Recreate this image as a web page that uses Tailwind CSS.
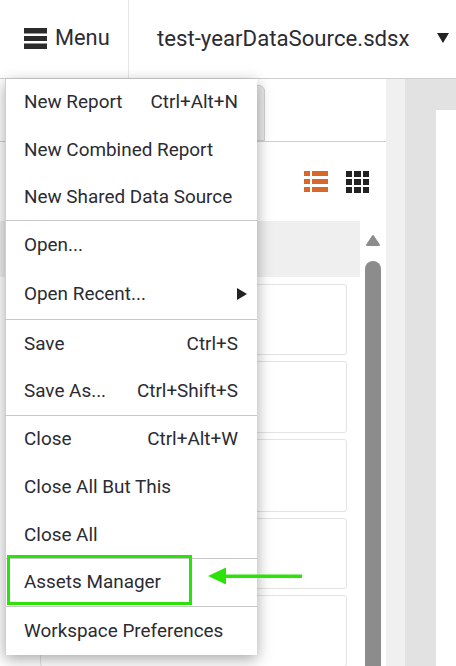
<!DOCTYPE html>
<html lang="en">
<head>
<meta charset="UTF-8">
<title>Menu</title>
<script src="https://cdn.jsdelivr.net/npm/@tailwindcss/browser@4"></script>
</head>
<body class="relative w-[456px] h-[666px] overflow-hidden bg-white font-['Roboto',sans-serif] text-[#2b2b33]">
  <!-- top bar -->
  <header class="flex h-[79px] border-b border-[#cfcfcf] bg-white">
    <div class="flex items-center w-[129px] pl-6 pb-[2px] border-r border-[#e6e6e6] h-full">
      <svg width="23" height="21" viewBox="0 0 23 21" class="mr-[8px]"><path fill="#2b2b2b" d="M0 0h23v5.5H0zM0 8h23v5H0zM0 15.5h23V21H0z"/></svg>
      <span class="text-[21.8px]">Menu</span>
    </div>
    <div class="flex items-center pl-[28px] text-[22.2px]">test-yearDataSource.sdsx</div>
    <svg width="12" height="10" viewBox="0 0 12 10" class="ml-[27px] mt-[33px]"><path fill="#222" d="M0 0h12L6 10z"/></svg>
  </header>
  <div class="flex h-[587px] overflow-hidden">
    <!-- left pane -->
    <main class="w-[386px] shrink-0 bg-white">
      <div class="h-[63px] border-b border-[#cfcfcf] pt-[6px] pl-[200px]">
        <div class="w-[65px] h-[56px] bg-[#e9e9e9] border border-[#d0d0d0] rounded-t-md"></div>
      </div>
      <div class="flex items-center justify-end h-[79px] pr-[17px] gap-[18px]">
        <svg width="24" height="22" viewBox="0 0 24 22"><path fill="#d8682a" d="M0 0h6v5H0zM8 0h16v5H8zM0 8h6v5H0zM8 8h16v5H8zM0 16h6v5H0zM8 16h16v5H8z"/></svg>
        <svg width="23" height="22" viewBox="0 0 23 22"><path fill="#222" d="M0 0h6v6H0zM8 0h7v6H8zM17 0h6v6h-6zM0 8h6v6H0zM8 8h7v6H8zM17 8h6v6h-6zM0 16h6v6H0zM8 16h7v6H8zM17 16h6v6h-6z"/></svg>
      </div>
      <div class="flex">
        <div class="w-[360px]">
          <div class="h-[56px] bg-[#efefef]"></div>
          <div class="flex flex-col gap-[6px] pt-[7px] pl-[40px] pr-[13px]">
            <div class="h-[71px] border border-[#e3e3e3] rounded-[3px]"></div>
            <div class="h-[72px] border border-[#e3e3e3] rounded-[3px]"></div>
            <div class="h-[73px] border border-[#e3e3e3] rounded-[3px]"></div>
            <div class="h-[71px] border border-[#e3e3e3] rounded-[3px]"></div>
            <div class="h-[72px] border border-[#e3e3e3] rounded-[3px]"></div>
          </div>
        </div>
        <div class="flex flex-col items-center w-[26px] pr-[1px]">
          <svg width="16" height="13" viewBox="0 0 16 13" class="mt-[13px]"><path fill="#8c8c8c" stroke="#8c8c8c" stroke-width="2" stroke-linejoin="round" d="M8 2l6 9H2z"/></svg>
          <div class="w-[16px] h-[500px] mt-[14px] bg-[#8c8c8c] rounded-t-lg"></div>
        </div>
      </div>
    </main>
    <div class="w-[19px] bg-[#f0f0f0]"></div>
    <div class="w-[31px] bg-[#e2e2e2]"></div>
    <div class="flex flex-col flex-1 bg-[#e2e2e2] pt-[31px]">
      <div class="flex-1 bg-white"></div>
    </div>
  </div>

  <!-- dropdown menu -->
  <nav class="absolute left-[5px] top-[79px] w-[252px] h-[576px] bg-white border-l border-[#cfcfcf] shadow-[0_4px_14px_rgba(0,0,0,0.35)] text-[18.9px]">
    <div class="h-[142px] border-b border-[#c8c8c8]">
      <div class="flex items-center justify-between h-[46px] pl-[18px] pr-[19px]"><span>New Report</span><span>Ctrl+Alt+N</span></div>
      <div class="flex items-center h-[46px] mt-[2px] pl-[18px]">New Combined Report</div>
      <div class="flex items-center h-[48px] pl-[18px]">New Shared Data Source</div>
    </div>
    <div class="h-[99px] border-b border-[#c8c8c8]">
      <div class="flex items-center h-[48px] pl-[18px]">Open...</div>
      <div class="flex items-center justify-between h-[50px] pl-[18px] pr-[10px]"><span>Open Recent...</span><svg width="10" height="12" viewBox="0 0 10 12"><path fill="#222" d="M0 0l10 6-10 6z"/></svg></div>
    </div>
    <div class="h-[96px] border-b border-[#c8c8c8]">
      <div class="flex items-center justify-between h-[48px] pl-[18px] pr-[19px]"><span>Save</span><span>Ctrl+S</span></div>
      <div class="flex items-center justify-between h-[47px] pl-[18px] pr-[19px]"><span>Save As...</span><span>Ctrl+Shift+S</span></div>
    </div>
    <div class="h-[143px] border-b border-[#c8c8c8]">
      <div class="flex items-center justify-between h-[46px] pl-[18px] pr-[19px]"><span>Close</span><span>Ctrl+Alt+W</span></div>
      <div class="flex items-center h-[50px] pl-[18px]">Close All But This</div>
      <div class="flex items-center h-[46px] pl-[18px]">Close All</div>
    </div>
    <div class="flex items-center h-[48px] border-b border-[#c8c8c8] pl-[18px]">Assets Manager</div>
    <div class="flex items-center h-[48px] pl-[18px]">Workspace Preferences</div>
  </nav>

  <!-- annotation -->
  <div class="absolute left-[7px] top-[555px] w-[185px] h-[50px] border-[3px] border-[#2be30a]"></div>
  <svg class="absolute left-[208px] top-[567px]" width="94" height="18" viewBox="0 0 94 18"><path fill="#2be30a" d="M0 9L18 0.5v7h76v3.5H18v6.5z"/></svg>
</body>
</html>
